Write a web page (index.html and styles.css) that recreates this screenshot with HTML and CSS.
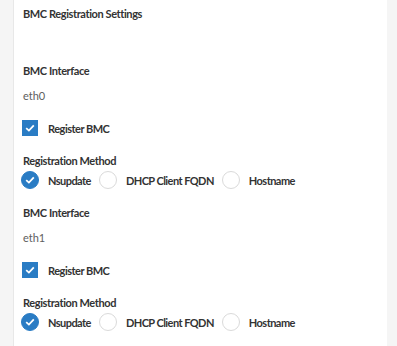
FILE: index.html
```html
<!DOCTYPE html>
<html lang="en">

<head>
    <meta name="viewport" content="width=device-width, initial-scale=1.0">
    <title>BMC Registration Settings</title>
    <link rel="stylesheet" href="styles.css">
</head>
<body>

    <div class="panel">
        <h1 class="title">BMC Registration Settings</h1>

        <!-- eth0 -->
        <div class="iface">
            <div class="label">BMC Interface</div>
            <div class="value">eth0</div>
            <label class="check">
                <span class="box"><svg width="10" height="8" viewBox="0 0 10 8"><path d="M1.2 4.2 L3.9 6.6 L8.8 1.4" fill="none" stroke="#fff" stroke-width="1.8"/></svg></span>
                Register BMC
            </label>
            <div class="label method">Registration Method</div>
            <div class="radios">
                <label class="radio"><span class="dot on"><svg width="10" height="8" viewBox="0 0 10 8"><path d="M1.2 4.2 L3.9 6.6 L8.8 1.4" fill="none" stroke="#fff" stroke-width="1.8"/></svg></span>Nsupdate</label>
                <label class="radio"><span class="dot"></span>DHCP Client FQDN</label>
                <label class="radio"><span class="dot"></span>Hostname</label>
            </div>
        </div>

        <!-- eth1 -->
        <div class="iface">
            <div class="label">BMC Interface</div>
            <div class="value">eth1</div>
            <label class="check">
                <span class="box"><svg width="10" height="8" viewBox="0 0 10 8"><path d="M1.2 4.2 L3.9 6.6 L8.8 1.4" fill="none" stroke="#fff" stroke-width="1.8"/></svg></span>
                Register BMC
            </label>
            <div class="label method">Registration Method</div>
            <div class="radios">
                <label class="radio"><span class="dot on"><svg width="10" height="8" viewBox="0 0 10 8"><path d="M1.2 4.2 L3.9 6.6 L8.8 1.4" fill="none" stroke="#fff" stroke-width="1.8"/></svg></span>Nsupdate</label>
                <label class="radio"><span class="dot"></span>DHCP Client FQDN</label>
                <label class="radio"><span class="dot"></span>Hostname</label>
            </div>
        </div>
    </div>

</body>

</html>
```

FILE: styles.css
```css
/* General */
body {
    margin: 0;
    background-color: #f5f5f5;
    font-family: Lato, 'Noto Sans', sans-serif;
    color: #333;
    font-size: 11px;
}

/* White panel */
.panel {
    background-color: white;
    border-left: 1px solid #e8e8e8;
    margin: 0 10px 0 13px;
    padding: 6px 0 0 9px;
    height: 346px;
    box-sizing: border-box;
}

.title {
    font-size: 11px;
    font-weight: bold;
    letter-spacing: -0.4px;
    margin: 0;
    line-height: 16px;
}

.iface {
    margin-top: 41px;
}

.iface + .iface {
    margin-top: 16px;
}

.label {
    font-weight: bold;
    letter-spacing: -0.4px;
    line-height: 16px;
}

.value {
    color: #5e5e5e;
    margin-top: 9px;
    line-height: 16px;
}

/* Checkbox */
.check {
    display: flex;
    align-items: center;
    gap: 10px;
    margin: 16px 0 0 -1px;
    font-weight: bold;
    letter-spacing: -0.5px;
    height: 16px;
}

.box {
    width: 16px;
    height: 16px;
    background-color: #2a7cc4;
    display: flex;
    align-items: center;
    justify-content: center;
}

.method {
    margin-top: 17px;
}

/* Radios */
.radios {
    display: flex;
    gap: 8px;
    margin: 2px 0 0 -2px;
}

.radio {
    display: flex;
    align-items: center;
    gap: 9px;
    font-weight: bold;
    letter-spacing: -0.55px;
    height: 18px;
}

.dot {
    width: 18px;
    height: 18px;
    border-radius: 50%;
    box-sizing: border-box;
    border: 1.5px solid #dadada;
    display: flex;
    align-items: center;
    justify-content: center;
}

.dot.on {
    background-color: #2a7cc4;
    border-color: #2a7cc4;
}
```
